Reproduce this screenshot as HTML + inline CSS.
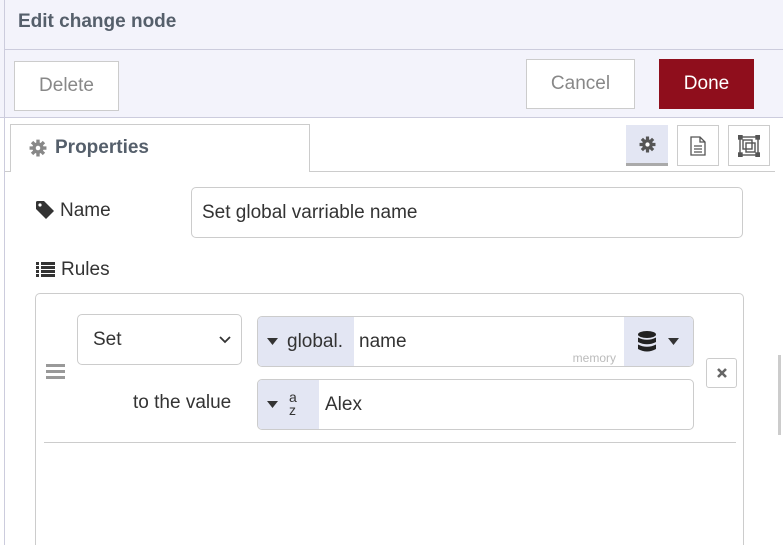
<!DOCTYPE html>
<html style="width:783px;height:545px;overflow:hidden"><head><style>
*{box-sizing:border-box}
body{margin:0;width:783px;height:545px;overflow:hidden;background:#fff;font-family:"Liberation Sans",sans-serif;position:relative;color:#333}
.a{position:absolute}
.btn{position:absolute;border:1px solid #ccc;background:#fff;color:#888;font-size:19px;display:flex;align-items:center;justify-content:center}
.in{position:absolute;border:1px solid #ccc;border-radius:5px;background:#fff;font-size:19px;display:flex;align-items:center}
</style></head><body>
<svg width="0" height="0" style="position:absolute"><defs>
<g id="gear"><circle cx="8" cy="8" r="5" fill="currentColor"/><g stroke="currentColor" stroke-width="3"><path d="M8 0.5V15.5M0.5 8H15.5M2.7 2.7L13.3 13.3M13.3 2.7L2.7 13.3"/></g><circle cx="8" cy="8" r="2" fill="#fff"/></g>
</defs></svg>
<div class="a" style="left:0;top:0;width:783px;height:118px;background:#f3f3fb;border-bottom:1px solid #ccd"></div>
<div class="a" style="left:4px;top:0;width:1px;height:545px;background:#ccd"></div>
<div class="a" style="left:5px;top:49px;width:778px;height:1px;background:#ccd"></div>
<div class="a" style="left:18px;top:11px;font-size:19px;font-weight:bold;color:#555f6b">Edit change node</div>
<div class="btn" style="left:14px;top:61px;width:105px;height:50px">Delete</div>
<div class="btn" style="left:526px;top:59px;width:109px;height:50px">Cancel</div>
<div class="btn" style="left:659px;top:59px;width:95px;height:50px;background:#8f0e1c;border-color:#8f0e1c;color:#fff">Done</div>
<div class="a" style="left:5px;top:171px;width:770px;height:1px;background:#ccc"></div>
<div class="a" style="left:10px;top:124px;width:300px;height:48px;background:#fff;border:1px solid #ccc;border-bottom:none;font-size:19px;font-weight:bold;color:#555f6b;padding:12px 0 0 18px;display:flex;gap:8px"><svg width="18" height="18" viewBox="0 0 16 16" style="color:#888;margin-top:2px"><use href="#gear"/></svg>Properties</div>
<div class="a" style="left:626px;top:125px;width:42px;height:41px;background:#e3e6f3;border-bottom:3px solid #aaa;display:flex;align-items:center;justify-content:center;color:#555"><svg width="17" height="17" viewBox="0 0 16 16"><use href="#gear"/></svg></div>
<div class="btn" style="left:677px;top:125px;width:42px;height:41px"><svg width="16" height="20" viewBox="0 0 16 20" fill="none" stroke="#555" stroke-width="1.3"><path d="M1 1H10L15 6V19H1Z M10 1V6H15 M4 10H12M4 13H12M4 16H12"/></svg></div>
<div class="btn" style="left:728px;top:125px;width:42px;height:41px"><svg width="22" height="22" viewBox="0 0 22 22" fill="none" stroke="#555" stroke-width="1.4"><rect x="2" y="2" width="18" height="18"/><rect x="5" y="5" width="9" height="9"/><rect x="8" y="8" width="9" height="9"/><g fill="#555"><rect x="0" y="0" width="4" height="4"/><rect x="18" y="0" width="4" height="4"/><rect x="0" y="18" width="4" height="4"/><rect x="18" y="18" width="4" height="4"/></g></svg></div>
<svg class="a" style="left:36px;top:201px" width="19" height="18" viewBox="0 0 19 18"><path d="M0 1.5Q0 0 1.5 0H8L18 10L10 18L0 8Z" fill="#333"/><circle cx="4" cy="4" r="1.6" fill="#fff"/></svg>
<div class="a" style="left:60px;top:200px;font-size:19px;color:#333">Name</div>
<div class="in" style="left:191px;top:187px;width:552px;height:51px;padding-left:10px">Set global varriable name</div>
<svg class="a" style="left:36px;top:262px" width="19" height="15" viewBox="0 0 19 15" fill="#333"><rect x="0" y="0" width="3" height="3"/><rect x="5" y="0" width="14" height="3"/><rect x="0" y="4" width="3" height="3"/><rect x="5" y="4" width="14" height="3"/><rect x="0" y="8" width="3" height="3"/><rect x="5" y="8" width="14" height="3"/><rect x="0" y="12" width="3" height="3"/><rect x="5" y="12" width="14" height="3"/></svg>
<div class="a" style="left:61px;top:259px;font-size:19px">Rules</div>
<div class="a" style="left:35px;top:293px;width:709px;height:252px;border:1px solid #ccc;border-bottom:none;border-radius:5px 5px 0 0"></div>
<div class="a" style="left:46px;top:364px;width:19px;height:3px;background:#999;box-shadow:0 6px #999,0 12px #999"></div>
<div class="in" style="left:77px;top:314px;width:165px;height:51px;padding-left:15px;justify-content:space-between;padding-right:10px">Set<svg width="12" height="8" viewBox="0 0 12 8" fill="none" stroke="#333" stroke-width="1.8"><path d="M1 1L6 6L11 1"/></svg></div>
<div class="in" style="left:257px;top:316px;width:437px;height:51px;overflow:hidden">
 <div style="width:96px;height:100%;background:#e3e6f3;display:flex;align-items:center;padding-left:9px"><svg width="11" height="7" style="margin-right:9px"><path d="M0 0H11L5.5 7Z" fill="#333"/></svg>global.</div>
 <div style="padding-left:5px;flex:1">name</div>
 <div class="a" style="right:77px;bottom:1px;font-size:12px;color:#bbb">memory</div>
 <div style="width:69px;height:100%;background:#e3e6f3;display:flex;align-items:center;justify-content:center;gap:12px"><svg width="18" height="22" viewBox="0 0 18 22" fill="#222"><ellipse cx="9" cy="3.5" rx="9" ry="3.5"/><path d="M0 6.5Q9 11 18 6.5V11Q9 15.5 0 11Z"/><path d="M0 13.5Q9 18 18 13.5V18Q9 23 0 18Z"/></svg><svg width="11" height="7"><path d="M0 0H11L5.5 7Z" fill="#333"/></svg></div>
</div>
<div class="a" style="left:133px;top:392px;font-size:19px">to the value</div>
<div class="in" style="left:257px;top:379px;width:437px;height:51px;overflow:hidden">
 <div style="width:61px;height:100%;background:#e3e6f3;display:flex;align-items:center;padding-left:9px"><svg width="11" height="7" style="margin-right:11px"><path d="M0 0H11L5.5 7Z" fill="#333"/></svg><span style="font-size:14px;line-height:13px;margin-top:-2px">a<br>z</span></div>
 <div style="padding-left:6px">Alex</div>
</div>
<div class="btn" style="left:706px;top:358px;width:31px;height:30px;border-radius:3px"><svg width="10" height="10" viewBox="0 0 10 10" stroke="#666" stroke-width="2.6"><path d="M1 1L9 9M9 1L1 9"/></svg></div>
<div class="a" style="left:44px;top:442px;width:692px;height:1px;background:#ccc"></div>
<div class="a" style="left:778px;top:355px;width:3px;height:80px;background:#ccc"></div>
</body></html>
